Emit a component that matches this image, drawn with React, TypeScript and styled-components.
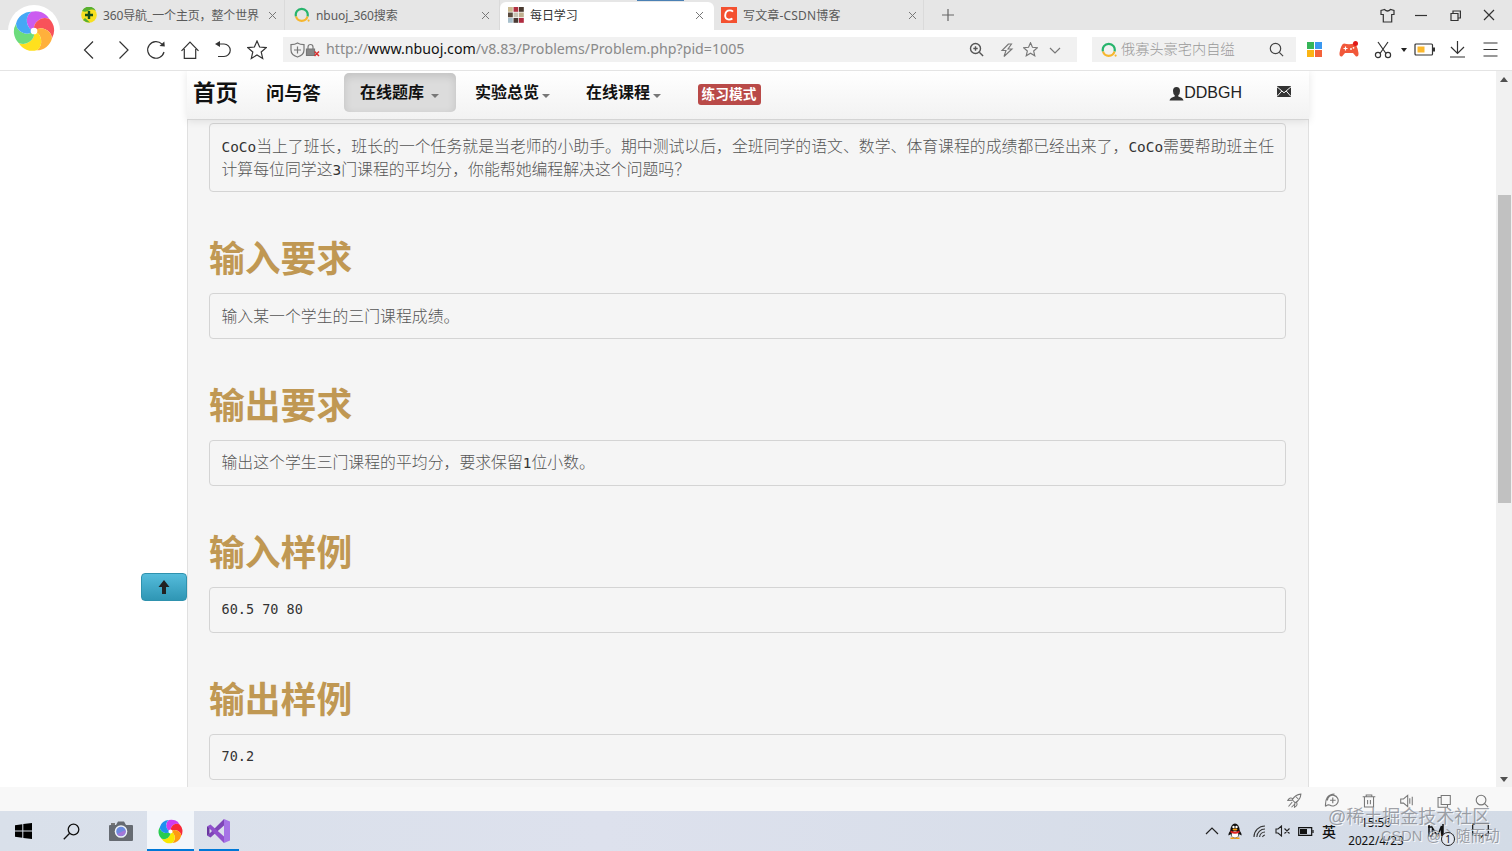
import React from 'react';
import styled, { createGlobalStyle } from 'styled-components';

const ui = `"Noto Sans", "Noto Sans CJK SC", sans-serif`;

const Global = createGlobalStyle`
  * { box-sizing: border-box; }
  body { margin: 0; background: #fff; overflow: hidden; font-family: ${ui}; }
  svg { display: block; flex: none; }
`;

const Screen = styled.div`
  width: 1512px; height: 851px; position: relative; overflow: hidden;
  display: flex; flex-direction: column; background: #fff;
`;

/* ---------- browser chrome ---------- */
const TabStrip = styled.div`
  height: 30px; background: #e6e6e6; display: flex; padding-left: 71px; flex: none;
`;
const Tab = styled.div<{ $w: number; $pad: number; $active?: boolean }>`
  width: ${p => p.$w}px; height: ${p => (p.$active ? 28 : 30)}px; margin-top: ${p => (p.$active ? 2 : 0)}px;
  padding: ${p => (p.$active ? 0 : 2)}px 6px 2px ${p => p.$pad}px;
  display: flex; align-items: center; flex: none;
  background: ${p => (p.$active ? '#fff' : 'transparent')};
  border-radius: ${p => (p.$active ? '6px 6px 0 0' : '0')};
  border-right: ${p => (p.$active ? 'none' : '1px solid #dadada')};
  color: ${p => (p.$active ? '#333' : '#5a5a5a')};
`;
const TabTitle = styled.span<{ $ls?: number }>`
  font-size: 12px; line-height: 18px; margin-left: 6px; padding-top: 1px; flex: 1; white-space: nowrap;
  letter-spacing: ${p => p.$ls ?? 0}px;
`;
const Slot = styled.div<{ $w: number }>`
  width: ${p => p.$w}px; height: 100%; display: flex; align-items: center; justify-content: center; flex: none;
`;
const Push = styled.div<{ $end?: number }>`
  margin-left: auto; margin-right: ${p => p.$end ?? 0}px; display: flex; align-items: center; height: 100%;
`;
const LoadStrip = styled.div`
  position: absolute; left: 637px; top: 0; width: 47px; height: 1px; background: #4a80b4;
`;
const LogoDisc = styled.div`
  position: absolute; left: 8px; top: 5px; width: 52px; height: 52px; border-radius: 50%;
  background: #fff; display: flex; align-items: center; justify-content: center;
`;
const Toolbar = styled.div`
  height: 41px; flex: none; display: flex; align-items: center; padding: 0 4px 1px 72.5px;
  border-bottom: 1px solid #e4e4e4; background: #fff;
`;
const Field = styled.div<{ $w: number; $ml: number; $pad: number }>`
  width: ${p => p.$w}px; height: 25px; margin-left: ${p => p.$ml}px; padding-left: ${p => p.$pad}px;
  background: #f1f1f1; display: flex; align-items: center; flex: none;
`;
const Url = styled.span`
  font-size: 14.2px; line-height: 22px; color: #8a8a8a; margin: -2px 0 0 5px; white-space: nowrap;
  b { font-weight: 400; color: #111; }
`;
const Hint = styled.span`
  font-size: 14.2px; line-height: 22px; color: #999; margin: -2px 0 0 4px; white-space: nowrap; font-weight: 300;
`;

/* ---------- page ---------- */
const Viewport = styled.div`
  height: 716px; flex: none; display: flex; overflow: hidden; background: #fff;
`;
const Gutter = styled.div`
  width: 187px; flex: none; padding: 502px 0 0 141px;
`;
const TopButton = styled.div`
  width: 46px; height: 28px; border-radius: 4px; border: 1px solid #2f92ae;
  background: linear-gradient(#55bcdb, #2f96b4); display: flex; align-items: center; justify-content: center;
`;
const Page = styled.div`
  width: 1122px; flex: none; background: #f5f5f5; border: solid #e0e0e0; border-width: 0 1px; height: 716px; overflow: visible;
`;
const Nav = styled.div`
  height: 49px; margin: 0 -1px; padding-left: 6px; display: flex; align-items: flex-start;
  background: linear-gradient(#fff, #f2f2f2); border-bottom: 1px solid #d4d4d4;
  box-shadow: 0 1px 8px rgba(0,0,0,.1);
  font-family: "Liberation Sans", "Noto Sans CJK SC", sans-serif; color: #111; position: relative;
`;
const NavItem = styled.div<{ $w: number; $size: number; $top: number }>`
  width: ${p => p.$w}px; font-size: ${p => p.$size}px; line-height: 24px; padding-top: ${p => p.$top}px;
  font-weight: 700; white-space: nowrap; display: flex; flex: none;
`;
const NavActive = styled.div`
  width: 112px; height: 39px; margin: 2px 19.5px 0 .5px; border-radius: 5px; background: #dcdcdc;
  box-shadow: inset 0 3px 8px rgba(0,0,0,.125); padding: 8px 0 0 16.5px;
  font-size: 16px; line-height: 24px; font-weight: 700; display: flex; white-space: nowrap; flex: none;
`;
const Caret = styled.i<{ $ml: number }>`
  width: 0; height: 0; border: 4.5px solid transparent; border-top-color: #777; border-bottom: 0;
  margin: 13px 0 0 ${p => p.$ml}px;
`;
const Mode = styled.div`
  width: 63px; height: 21px; margin: 13px 0 0 .5px; border-radius: 3px; background: #b94a48; color: #fff;
  font-size: 13.7px; line-height: 21px; font-weight: 700; text-align: center; white-space: nowrap;
`;
const User = styled.div`
  margin: 11px 35px 0 auto; display: flex; align-items: center; font-size: 16px; line-height: 22px; color: #222;
`;
const Mail = styled.div` margin: 15px 18px 0 0; `;
const Body = styled.div` padding: 3px 22px 0 21px; `;
const Pre = styled.div<{ $h: number; $top?: number }>`
  height: ${p => p.$h}px; border: 1px solid #d4d4d4; border-radius: 4px; padding: ${p => p.$top ?? 11}px 0 0 11.5px;
  font-family: "Noto Sans CJK SC", sans-serif; font-size: 15.86px; line-height: 22px; color: #555; font-weight: 300;
  white-space: nowrap;
`;
const Latin = styled.span<{ $s?: number }>`
  font-family: "DejaVu Sans Mono", monospace; font-size: ${p => p.$s ?? 14.4}px; color: #333; font-weight: 400;
`;
const Title = styled.h1`
  margin: 0; height: 101px; padding-top: 39px; font-size: 35.8px; line-height: 50px; font-weight: 700; color: #c09853;
  font-family: "Noto Sans CJK SC", sans-serif;
`;
const Scroll = styled.div`
  margin-left: auto; width: 16px; height: 716px; background: #f1f1f1; display: flex; flex-direction: column;
  align-items: center; padding: 6px 0 5px; justify-content: space-between;
`;
const Thumb = styled.div` width: 13px; height: 308px; background: #c1c1c1; margin-bottom: 161px; `;

/* ---------- bottom bars ---------- */
const Status = styled.div`
  height: 24px; flex: none; background: #f8f8f8; display: flex; justify-content: flex-end; padding: 3px 11.5px 0 0;
`;
const Taskbar = styled.div`
  height: 40px; flex: none; display: flex; background: linear-gradient(90deg, #d9e0ea, #dde1ed 40%, #d3dbe6);
`;
const TaskItem = styled.div<{ $w: number; $on?: boolean; $line?: boolean }>`
  width: ${p => p.$w}px; height: 40px; display: flex; align-items: center; justify-content: center; flex: none;
  background: ${p => (p.$on ? '#f3f6fa' : 'transparent')};
  border-bottom: ${p => (p.$line ? '2px solid #0078d7' : 'none')};
  padding-top: ${p => (p.$line ? 2 : 0)}px;
`;
const TaskGap = styled.div` width: 5px; flex: none; `;
const Clock = styled.div`
  width: 74px; font-size: 11.7px; line-height: 18px; text-align: center; color: #111; white-space: nowrap;
`;
const Ime = styled.span` font-size: 14px; font-weight: 500; color: #111; `;
const Mark = styled.div<{ $x: number; $y: number; $s: number }>`
  position: absolute; left: ${p => p.$x}px; top: ${p => p.$y}px; font-size: ${p => p.$s}px; line-height: 24px;
  color: rgba(130,133,140,.75); text-shadow: 1px 1px 0 rgba(255,255,255,.8); white-space: nowrap;
  font-family: "Liberation Sans", "Noto Sans CJK SC", sans-serif;
`;
const NoticeCount = styled.div`
  position: absolute; left: 1441px; top: 832px; width: 14px; height: 14px; border-radius: 50%;
  border: 1px solid #222; background: #e4e8f0; font-size: 10px; line-height: 12px; text-align: center; color: #111;
`;

/* ---------- drawings ---------- */
type IconProps = { w?: number; h?: number; vb?: string; sw?: number; c?: string; children: React.ReactNode };
const Icon = ({ w = 20, h, vb = '0 0 20 20', sw = 1.2, c = '#333', children }: IconProps) => (
  <svg width={w} height={h ?? w} viewBox={vb} fill="none" stroke={c} strokeWidth={sw}>{children}</svg>
);

const petals = ['#cb5cf0', '#f8525a', '#ffb03c', '#ffe01e', '#6cdc7c', '#45a8f6'];
const strong = ['#d03cf0', '#f82838', '#ff9a10', '#f8e800', '#28cc50', '#2090f0'];
const Pinwheel = ({ size, colors }: { size: number; colors: string[] }) => {
  const tip = (k: number) => {
    const a = ((k * 60 - 98) * Math.PI) / 180;
    return `${(18.5 * Math.cos(a)).toFixed(2)} ${(18.5 * Math.sin(a)).toFixed(2)}`;
  };
  return (
    <svg width={size} height={size} viewBox="-20 -20 40 40">
      {colors.map((c, k) => (
        <path key={c} fill={c} d={`M0 0A10.5 10.5 0 0 1 ${tip(k)}A15 15 0 0 1 ${tip(k + 1)}A10.5 10.5 0 0 0 0 0Z`} />
      ))}
      <circle r="3.2" fill="#fff" />
    </svg>
  );
};
const Close = () => <Icon w={9} vb="0 0 9 9" sw={1} c="#777"><path d="M1 1l7 7M8 1l-7 7" /></Icon>;
const Ring = () => (
  <svg width="16" height="16" viewBox="0 0 16 16" fill="none" strokeWidth="2.2">
    <path d="M2 9.500A6 6 0 1 1 13.500 9.500" stroke="#27b46c" />
    <path d="M2 9.500A6 6 0 0 0 13.500 9.500" stroke="#f6b62e" />
    <circle cx="14.6" cy="13.6" r="1.1" fill="#f6b62e" stroke="none" />
  </svg>
);
const Magnifier = ({ s = 15, c = '#444' }: { s?: number; c?: string }) => (
  <Icon w={s} vb="0 0 15 15" c={c}><circle cx="6.5" cy="6.5" r="5.2" /><path d="M10.3 10.3l3.800 3.800" /></Icon>
);
const starPath = 'M10 1l2.600 6 6.600.600-5 4.400 1.500 6.400L10 15l-5.700 3.400 1.500-6.400-5-4.400L7.400 7z';
const mosaic = ['#c9b98f', '#b03040', '#4a3a30', '#5a4a3c', '#c8c4b4', '#c0b090', '#a8c0cc', '#4a3a34', '#b02c40'];

const Section = ({ title, top, children }: { title: string; top?: number; children: React.ReactNode }) => (
  <><Title>{title}</Title><Pre $h={46} $top={top}>{children}</Pre></>
);

export default function App() {
  return (
    <>
      <Global />
      <Screen>
        <TabStrip>
          <Tab $w={214} $pad={10}>
            <svg width="16" height="16" viewBox="0 0 16 16">
              <circle cx="8" cy="8" r="7.8" fill="#f8e020" /><path d="M1 4A7.8 7.8 0 0 1 15 4Q11 1.500 8 3.500T1 4ZM2 13Q5 15.800 9 15.600L4 11Z" fill="#58b030" />
              <path d="M8 4v8M4 8h8" stroke="#174f1c" strokeWidth="2.4" />
            </svg>
            <TabTitle $ls={-0.13}>360导航_一个主页，整个世界</TabTitle>
            <Slot $w={12}><Close /></Slot>
          </Tab>
          <Tab $w={215} $pad={9}>
            <Ring /><TabTitle $ls={-0.08}>nbuoj_360搜索</TabTitle><Slot $w={15}><Close /></Slot>
          </Tab>
          <Tab $w={214} $pad={8} $active>
            <svg width="16" height="16" viewBox="0 0 16 16">
              {mosaic.map((c, i) => <rect key={i} x={(i % 3) * 5.5} y={Math.floor(i / 3) * 5.5} width="4.8" height="4.8" fill={c} />)}
            </svg>
            <TabTitle $ls={-0.1}>每日学习</TabTitle><Slot $w={17}><Close /></Slot>
          </Tab>
          <Tab $w={210} $pad={7}>
            <svg width="16" height="16" viewBox="0 0 16 16">
              <rect width="16" height="16" fill="#f4502f" />
              <path d="M12 4.600Q10.800 3.400 8.800 3.400C5.800 3.400 4.400 5.600 4.200 8.200C4 11 5.400 12.600 8 12.600Q10 12.600 11.400 11.600" fill="none" stroke="#fff" strokeWidth="1.9" />
            </svg>
            <TabTitle $ls={0.18}>写文章-CSDN博客</TabTitle><Slot $w={9}><Close /></Slot>
          </Tab>
          <Slot $w={47}><Icon w={12} vb="0 0 12 12" c="#666"><path d="M6 0v12M0 6h12" /></Icon></Slot>
          <Push $end={7}>
            <Slot $w={33}><Icon w={15} vb="0 0 15 15" c="#333"><path d="M4.500 1.500L1 2.500v4h2.300v7.500h8.400V6.500H14v-4L10.500 1.500Q7.500 4.500 4.500 1.500Z" /></Icon></Slot>
            <Slot $w={34}><Icon w={12} vb="0 0 12 12"><path d="M0 6.500h12" /></Icon></Slot>
            <Slot $w={34}><Icon w={11} vb="0 0 11 11"><path d="M1 3.500h7v7H1zM3 3.500V1h7.400v7H8" /></Icon></Slot>
            <Slot $w={33}><Icon w={12} vb="0 0 12 12"><path d="M1 1l10 10M11 1L1 11" /></Icon></Slot>
          </Push>
        </TabStrip>
        <LoadStrip />

        <Toolbar>
          <Slot $w={33.5}><Icon><path d="M14 1.500L5.500 10l8.500 8.500" /></Icon></Slot>
          <Slot $w={33.5}><Icon><path d="M6.500 1.500L15 10l-8.500 8.500" /></Icon></Slot>
          <Slot $w={33.5}><Icon><path d="M18 12A8.300 8.300 0 1 1 16 4.200" /><path d="M13.500 6L18.800 6.500L18.300 1.500z" fill="#333" stroke="none" /></Icon></Slot>
          <Slot $w={33.5}><Icon><path d="M1.500 10.800L10 2l8.500 8.800M4.300 9v9.300h11.400V9" /></Icon></Slot>
          <Slot $w={33.5}><Icon><path d="M4 4h7a6 6 0 0 1 0 12.500H5" /><path d="M2 4l5-3v6z" fill="#333" stroke="none" /></Icon></Slot>
          <Slot $w={33}><Icon><path d={starPath} /></Icon></Slot>
          <Field $w={794} $ml={10} $pad={7}>
            <Icon w={15} h={16} vb="0 0 15 16" c="#777"><path d="M7.500 1Q10 2.600 14 2.600V8q0 5-6.500 7Q1 13 1 8V2.600Q5 2.600 7.500 1zM7.500 4.500v7M4 8h7" /></Icon>
            <Icon w={16} h={14} vb="0 0 16 14" c="#777"><path d="M1.500 6h8v6.500h-8z" fill="#888" /><path d="M3 6V4a2.500 2.500 0 0 1 5 0v2" /><path d="M9.500 8.500l4.500 4.500M14 8.500l-4.500 4.500" stroke="#d93030" strokeWidth="1.500" /></Icon>
            <Url>http://<b>www.nbuoj.com</b>/v8.83/Problems/Problem.php?pid=1005</Url>
            <Push $end={10.5}>
              <Slot $w={36}><Icon w={15} vb="0 0 15 15" c="#555" sw={1.4}><circle cx="6.500" cy="6.500" r="5" /><path d="M10.300 10.300l3.800 3.800M6.500 4.300v4.400M4.300 6.500h4.400" /></Icon></Slot>
              <Slot $w={24}><Icon w={14} vb="0 0 14 14" c="#777" sw={1.1}><path d="M8.500 1L2 7.500h4L4 13.500 12 6H8L11.500 1z" /></Icon></Slot>
              <Slot $w={24}><Icon w={15} c="#777" sw={1.5}><path d={starPath} /></Icon></Slot>
              <Slot $w={24}><Icon w={12} vb="0 0 12 12" c="#777"><path d="M1 4l5 5 5-5" /></Icon></Slot>
            </Push>
          </Field>
          <Field $w={204} $ml={15} $pad={9}>
            <Ring /><Hint>俄寡头豪宅内自缢</Hint><Push $end={12}><Magnifier /></Push>
          </Field>
          <Slot $w={37}>
            <svg width="15" height="15" viewBox="0 0 15 15">
              <path d="M0 0h7v7H0z" fill="#35b558" /><path d="M8 0h7v7H8z" fill="#3a98f0" /><path d="M0 8h7v7H0z" fill="#fbb414" /><path d="M8 8h7v7H8z" fill="#f4623a" />
            </svg>
          </Slot>
          <Slot $w={32}>
            <svg width="20" height="17" viewBox="0 0 20 17">
              <path d="M5 2.500Q10 4 15 2.500Q18 3 19.500 12Q19.800 16 17 15.500L14 12H6L3 15.500Q.2 16 .5 12Q2 3 5 2.500z" fill="#f1583a" />
              <path d="M6.500 5.500v4M4.500 7.500h4" stroke="#fff" strokeWidth="1.2" /><circle cx="12" cy="8" r=".9" fill="#fff" /><circle cx="14.500" cy="6.800" r=".9" fill="#fff" />
              <circle cx="16.500" cy="2.500" r="2.500" fill="#e01818" />
            </svg>
          </Slot>
          <Slot $w={35}><Icon w={18} vb="0 0 18 18"><path d="M4 1l8 11.500M14 1L6 12.500" /><circle cx="4" cy="14" r="2.600" /><circle cx="14" cy="14" r="2.600" /></Icon></Slot>
          <Slot $w={7}><svg width="6" height="4" viewBox="0 0 6 4"><path d="M0 0h6L3 4z" fill="#222" /></svg></Slot>
          <Slot $w={36}><Icon w={22} h={13} vb="0 0 22 13"><rect x="1" y="1" width="17.500" height="11" rx="1" /><path d="M3.500 3.500h7v6h-7z" fill="#fdb92c" stroke="none" /><path d="M20 4.500v4" strokeWidth="2" /></Icon></Slot>
          <Slot $w={28}><Icon w={17} vb="0 0 17 17"><path d="M8.500 0v12M2 6l6.500 6.500L15 6M1 16h15" /></Icon></Slot>
          <Slot $w={38}><Icon w={15} vb="0 0 15 15"><path d="M.500 1h14M.500 7.500h14M.500 14h14" /></Icon></Slot>
        </Toolbar>
        <LogoDisc><Pinwheel size={42} colors={petals} /></LogoDisc>

        <Viewport>
          <Gutter>
            <TopButton>
              <svg width="12" height="14" viewBox="0 0 12 14"><path d="M6 0l5.500 7H8v7H4V7H.500z" fill="#222" /></svg>
            </TopButton>
          </Gutter>
          <Page>
            <Nav>
              <NavItem $w={73} $size={22.5} $top={11}>首页</NavItem>
              <NavItem $w={77} $size={18.2} $top={11}>问与答</NavItem>
              <NavActive>在线题库<Caret $ml={6.5} /></NavActive>
              <NavItem $w={111} $size={16} $top={10}>实验总览<Caret $ml={2.5} /></NavItem>
              <NavItem $w={111} $size={16} $top={10}>在线课程<Caret $ml={2.5} /></NavItem>
              <Mode>练习模式</Mode>
              <User>
                <svg width="15" height="15" viewBox="0 0 15 15"><path d="M7.500 1Q11 1 11 5Q11 8 9.300 9.200V10.500Q14 11.500 14.500 14.500H.500Q1 11.500 5.700 10.500V9.200Q4 8 4 5Q4 1 7.500 1z" fill="#333" /></svg>
                DDBGH
              </User>
              <Mail>
                <svg width="14" height="11" viewBox="0 0 14 11"><path d="M0 0h14v11H0z" fill="#333" /><path d="M0 .800l7 6 7-6M0 10.500L4.800 5M14 10.500L9.200 5" stroke="#f5f5f5" fill="none" /></svg>
              </Mail>
            </Nav>
            <Body>
              <Pre $h={69}>
                <Latin>CoCo</Latin>当上了班长，班长的一个任务就是当老师的小助手。期中测试以后，全班同学的语文、数学、体育课程的成绩都已经出来了，<Latin>CoCo</Latin>需要帮助班主任<br />
                计算每位同学这<Latin>3</Latin>门课程的平均分，你能帮她编程解决这个问题吗？
              </Pre>
              <Section title="输入要求">输入某一个学生的三门课程成绩。</Section>
              <Section title="输出要求" top={10}>输出这个学生三门课程的平均分，要求保留<Latin>1</Latin>位小数。</Section>
              <Section title="输入样例" top={9}><Latin $s={13.5}>60.5 70 80</Latin></Section>
              <Section title="输出样例" top={9}><Latin $s={13.5}>70.2</Latin></Section>
            </Body>
          </Page>
          <Scroll>
            <svg width="8" height="5" viewBox="0 0 8 5"><path d="M0 5h8L4 0z" fill="#505050" /></svg>
            <Thumb />
            <svg width="8" height="5" viewBox="0 0 8 5"><path d="M0 0h8L4 5z" fill="#505050" /></svg>
          </Scroll>
        </Viewport>

        <Status>
          <Slot $w={37.5}><Icon w={15} c="#777" sw={1.4}><path d="M18.500 1.500Q11 2 7 9l4 4Q18 9 18.500 1.500zM8 7.500Q3 5 1 10l6-.5M12.500 12Q15 17 10 19l.5-6M7 12l-5 6M10 15l-4 4M12 5l3 3" /></Icon></Slot>
          <Slot $w={37.5}><Icon w={15} c="#777" sw={1.5}><path d="M2 18Q1 2 14 1.500M4.500 10a7.200 7.200 0 1 1 3 6Q4 15 2 18M11.700 6v7.500M8 9.700h7.500" /></Icon></Slot>
          <Slot $w={37.5}><Icon w={14} c="#777" sw={1.5}><path d="M1 4h18M6 4V1.500h8V4M3.500 4v14.500h13V4M8 8.500v6M12 8.500v6" /></Icon></Slot>
          <Slot $w={37.5}><Icon w={14} c="#777" sw={1.5}><path d="M1 7h4l6-5v16l-6-5H1zM14 6v8M17.500 4v12" /></Icon></Slot>
          <Slot $w={37.5}><Icon w={14} c="#777" sw={1.5}><path d="M6 2h13v13H6zM6 5H1.500v14H15v-4" /></Icon></Slot>
          <Slot $w={37.5}><Magnifier s={14} c="#777" /></Slot>
        </Status>

        <Taskbar>
          <TaskItem $w={47}><svg width="17" height="16" viewBox="0 0 17 16"><path d="M0 2.300L7.300 1.200V7.500H0zM8.300 1L17 0v7.500H8.300zM0 8.500h7.300v6.300L0 13.700zM8.300 8.500H17V16l-8.700-1z" fill="#000" /></svg></TaskItem>
          <TaskItem $w={48}><Icon w={17} vb="0 0 17 17" c="#111" sw={1.3}><circle cx="10.500" cy="6.500" r="5.300" /><path d="M6.700 10.300L.800 16.200" /></Icon></TaskItem>
          <TaskItem $w={52}>
            <svg width="24" height="20" viewBox="0 0 24 20">
              <path d="M1 4h6l2-3.500h6L17 4h6q1 0 1 1v14q0 1-1 1H1q-1 0-1-1V5q0-1 1-1z" fill="#666b72" /><path d="M2 2h4v2H2z" fill="#777" />
              <circle cx="12" cy="10.500" r="6.300" fill="#eef2f8" /><circle cx="12" cy="10.500" r="4.800" fill="#6c8be0" /><path d="M8 13a4.800 4.800 0 0 0 8.500-4z" fill="#a478d8" />
            </svg>
          </TaskItem>
          <TaskItem $w={47} $on $line><Pinwheel size={25} colors={strong} /></TaskItem>
          <TaskGap />
          <TaskItem $w={40} $line>
            <svg width="24" height="24" viewBox="0 0 24 24">
              <path d="M17 0l6 2.500v19L17 24z" fill="#a673e6" /><path d="M17 0v6.500L3.500 18.500 0 16.500 2.500 14.500z" fill="#7e45b8" /><path d="M17 24v-6.500L3.500 5.500 0 7.500 2.500 9.500z" fill="#9050cc" /><path d="M0 7.500l2.500 1.500v6L0 16.500z" fill="#6a35a0" />
            </svg>
          </TaskItem>
          <Push $end={12}>
            <Slot $w={23}><Icon w={14} vb="0 0 14 14" c="#222"><path d="M1 10l6-6 6 6" /></Icon></Slot>
            <Slot $w={24}>
              <svg width="14" height="16" viewBox="0 0 14 16">
                <ellipse cx="7" cy="8" rx="4.800" ry="7.500" fill="#111" /><path d="M3 7Q0 10 .500 12.500L3 11zM11 7q3 3 2.500 5.500L11 11z" fill="#111" />
                <ellipse cx="7" cy="11.500" rx="3.300" ry="3.300" fill="#fff" /><path d="M2.500 7.500Q7 10 11.500 7.500V9.500Q7 12 2.500 9.500z" fill="#e02020" /><circle cx="5.500" cy="4" r="1.200" fill="#fff" /><circle cx="8.500" cy="4" r="1.200" fill="#fff" /><ellipse cx="7" cy="6.500" rx="2.500" ry="1" fill="#f8a010" /><path d="M2.500 14.500h4v1.500h-4zM7.500 14.500h4v1.500h-4z" fill="#f8a010" />
              </svg>
            </Slot>
            <Slot $w={25}><Icon w={13} vb="0 0 13 13" c="#333" sw={1.1}><path d="M1 12A11 11 0 0 1 12 1M3.800 12A8.200 8.200 0 0 1 12 4M6.600 12A5.500 5.500 0 0 1 12 7M9.500 12A3 3 0 0 1 12 10" /></Icon></Slot>
            <Slot $w={21}><Icon w={16} h={12} vb="0 0 16 12" c="#222" sw={1.1}><path d="M1 4h2l3.500-3v10L3 8H1zM9.500 3.500l5 5M14.500 3.500l-5 5" /></Icon></Slot>
            <Slot $w={26}><Icon w={16} h={9} vb="0 0 16 9" c="#111"><path d="M.700.700h13v7.600h-13z" /><path d="M2 2h7v5H2z" fill="#111" stroke="none" /><path d="M15 3v3" /></Icon></Slot>
            <Slot $w={20}><Ime>英</Ime></Slot>
            <Clock>15:56<br />2022/4/23</Clock>
            <Slot $w={47}><Icon w={20} h={16} vb="0 0 20 16" c="#111" sw={1.5}><path d="M2 2v11h3.500V5l5 8 4-10v10M16 1v12M1 4h4" /></Icon></Slot>
            <Slot $w={40}><Icon w={17} h={16} vb="0 0 17 16" c="#111"><path d="M.700 1h15.600v11H11l-2.500 3V12H.700z" /></Icon></Slot>
          </Push>
        </Taskbar>
        <Mark $x={1328} $y={805} $s={18}>@稀土掘金技术社区</Mark>
        <Mark $x={1381} $y={824} $s={14.6}>CSDN @心随而动</Mark>
        <NoticeCount>1</NoticeCount>
      </Screen>
    </>
  );
}
